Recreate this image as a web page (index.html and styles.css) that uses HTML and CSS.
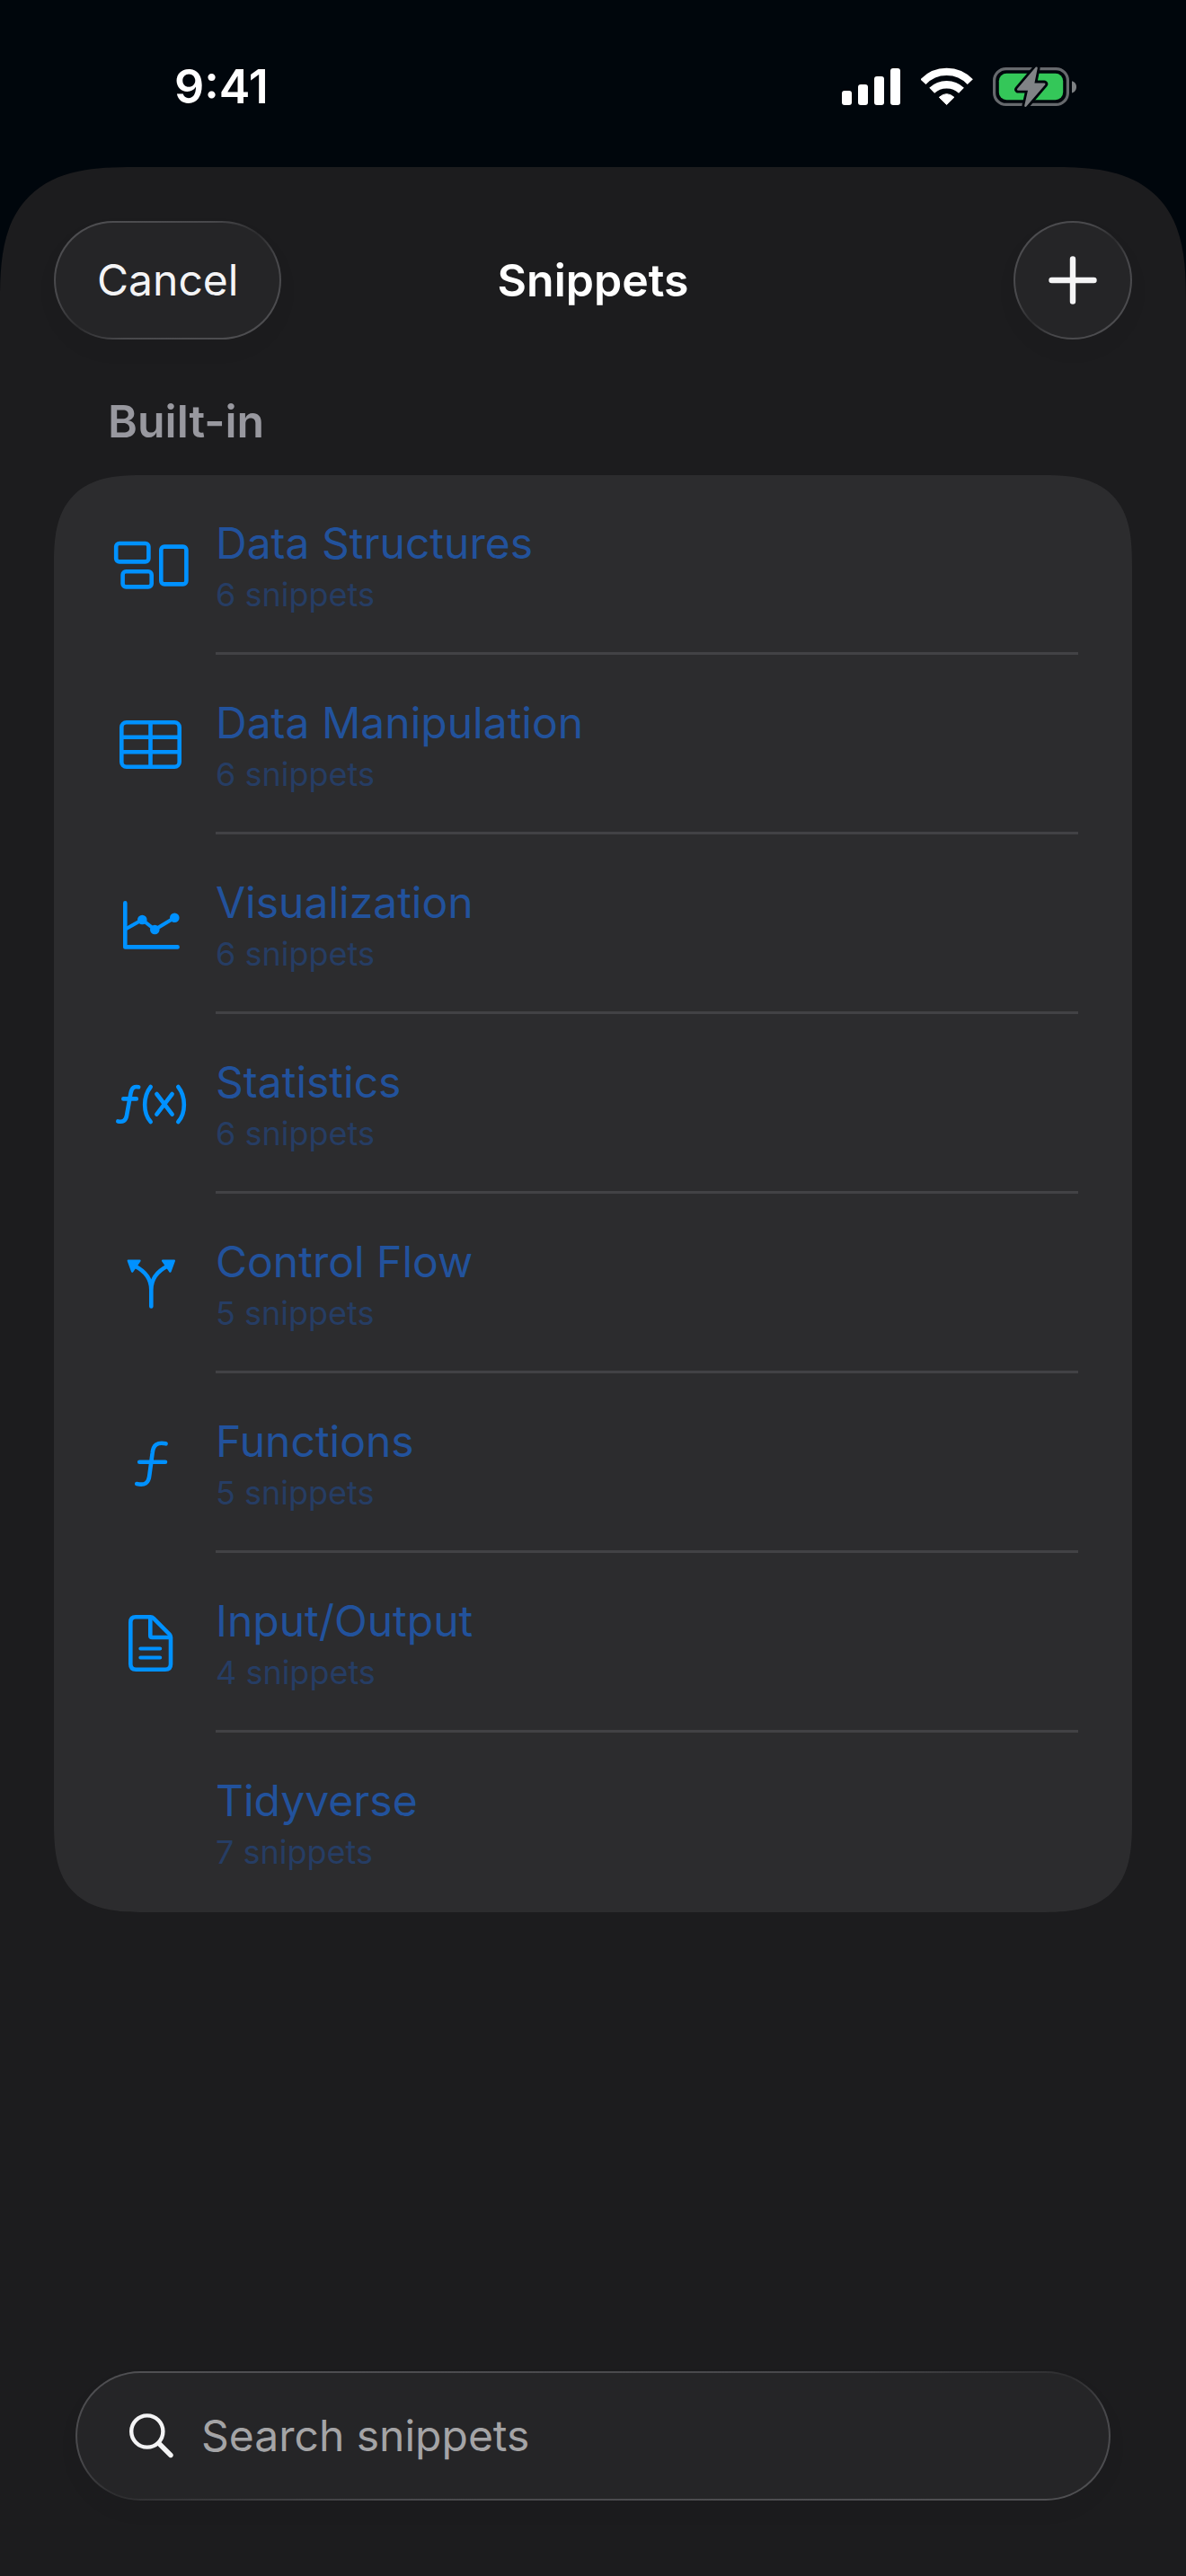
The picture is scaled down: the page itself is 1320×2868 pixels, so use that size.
FILE: index.html
```html
<!DOCTYPE html>
<html lang="en">
<head>
<meta charset="utf-8">
<meta name="viewport" content="width=device-width, initial-scale=1">
<title>Snippets</title>
<link rel="stylesheet" href="styles.css">
</head>
<body>
<div class="status-bar">
  <time class="clock">9:41</time>
  <div class="status-icons">
    <svg width="66" height="44" viewBox="0 0 66 44" fill="#fff" aria-hidden="true">
      <rect x="0" y="26" width="11" height="16" rx="3"/>
      <rect x="18" y="19" width="11" height="23" rx="3"/>
      <rect x="36" y="10" width="11" height="32" rx="3"/>
      <rect x="54" y="1" width="11" height="41" rx="3"/>
    </svg>
    <svg width="58" height="44" viewBox="0 0 58 44" fill="none" stroke="#fff" aria-hidden="true">
      <path d="M2.4 16.2A36 36 0 0 1 54.8 16.2" stroke-width="8.4"/>
      <path d="M12.2 25.8A23.7 23.7 0 0 1 45 25.8" stroke-width="8.4"/>
      <path d="M20.3 33.3Q28.6 26 36.9 33.3L28.6 41.5Z" fill="#fff" stroke-width="1" stroke-linejoin="round"/>
    </svg>
    <svg class="battery" width="94" height="44" viewBox="0 0 94 44" aria-hidden="true">
      <rect x="1.6" y="1.6" width="81.8" height="39.8" rx="13" fill="none" stroke="#66696d" stroke-width="3.2"/>
      <path d="M88 15.2C91.500 16 93 18.800 93 21.700C93 24.600 91.500 27.500 88 28.400Z" fill="#7d8083"/>
      <rect x="6.800" y="6.800" width="71.400" height="29.400" rx="8.500" fill="#34c759"/>
      <path d="M48.600 .6L28.200 24.600H40.500L36.400 42.800L57.200 18.600H45Z" fill="#00060c" stroke="#00060c" stroke-width="8" stroke-linejoin="round"/>
      <path d="M48.600 .6L28.200 24.600H40.500L36.400 42.800L57.200 18.600H45Z" fill="#808386" stroke="#808386" stroke-width="2.400" stroke-linejoin="round"/>
    </svg>
  </div>
</div>

<main class="sheet">
  <header class="nav">
    <button type="button" class="glass cancel">Cancel</button>
    <h1 class="title">Snippets</h1>
    <button type="button" class="glass add" aria-label="Add snippet">
      <svg width="54" height="54" viewBox="0 0 54 54" fill="none" stroke="#f4f4f5" stroke-width="6.400" stroke-linecap="round" aria-hidden="true"><path d="M27 3.500V50.500M3.500 27H50.500"/></svg>
    </button>
  </header>

  <section>
    <h2 class="section-title">Built-in</h2>
    <ul class="list">
      <li><a class="row" href="#data-structures">
        <svg class="icon" viewBox="0 0 96 100" aria-hidden="true"><rect x="9.200" y="26" width="36.200" height="20.400" rx="3.600"/><rect x="16.600" y="57.300" width="32.100" height="17.100" rx="3.600"/><rect x="59.300" y="29.600" width="28.100" height="41.800" rx="3.600"/></svg>
        <span class="label"><span class="name">Data Structures</span><span class="count">6 snippets</span></span></a></li>
      <li><a class="row" href="#data-manipulation">
        <svg class="icon" viewBox="0 0 96 100" aria-hidden="true"><rect x="15.300" y="25.300" width="64.400" height="49.400" rx="5.500"/><path d="M47.500 25.300V74.700M15.300 41.700H79.700M15.300 58.200H79.700"/></svg>
        <span class="label"><span class="name">Data Manipulation</span><span class="count">6 snippets</span></span></a></li>
      <li><a class="row" href="#visualization">
        <svg class="icon" viewBox="0 0 96 100" aria-hidden="true"><path d="M19.300 26.400V75.400H77.600"/><path class="thin" d="M20.500 55L38.300 45L52.300 56L74.300 42.700"/><g class="solid"><circle cx="38.300" cy="45" r="5.300"/><circle cx="52.300" cy="56" r="5.300"/><circle cx="74.300" cy="42.700" r="5.300"/></g></svg>
        <span class="label"><span class="name">Visualization</span><span class="count">6 snippets</span></span></a></li>
      <li><a class="row" href="#statistics">
        <svg class="icon" viewBox="0 0 96 100" aria-hidden="true"><path d="M11.300 69.400C17 70.600 20 68.600 21 63L25.500 38C26.700 31.800 29.500 30.200 34.200 31.200M17.300 44.400H31.800"/><path d="M47.700 31C39 42 39 60 47.700 70M78.300 31C87 42 87 60 78.300 70M54.400 39L71.600 61.600M71.600 39L54.400 61.600"/></svg>
        <span class="label"><span class="name">Statistics</span><span class="count">6 snippets</span></span></a></li>
      <li><a class="row" href="#control-flow">
        <svg class="icon" viewBox="0 0 96 100" aria-hidden="true"><path d="M48.300 75.500V57C48.300 46 42 36.500 30 30.500M48.300 57C48.300 46 54.600 36.500 66.600 30.500"/><g class="solid"><path d="M22.800 24.600H35.500L27.200 36.600ZM73.800 24.600H61.100L69.400 36.600Z" stroke="currentColor" stroke-width="2.400"/></g></svg>
        <span class="label"><span class="name">Control Flow</span><span class="count">5 snippets</span></span></a></li>
      <li><a class="row" href="#functions">
        <svg class="icon" viewBox="0 0 96 100" aria-hidden="true"><path d="M32.200 73C41 75 45.500 72.500 46.400 63L49.600 39C50.500 29.500 55 26.500 64.600 28.300M35.200 48.700H64"/></svg>
        <span class="label"><span class="name">Functions</span><span class="count">5 snippets</span></span></a></li>
      <li><a class="row" href="#input-output">
        <svg class="icon" viewBox="0 0 96 100" aria-hidden="true"><path d="M31 21.300H47.500Q49.500 21.300 51 22.800L68.600 40.500Q70 42 70 44V73.700Q70 79.700 64 79.700H31.300Q25.300 79.700 25.300 73.700V27.300Q25.300 21.300 31 21.300Z"/><path d="M47.300 22V42Q47.300 44 49.300 44H69.500"/><path class="thin" d="M36.300 56.400H58.200M36.300 66.600H58.200"/></svg>
        <span class="label"><span class="name">Input/Output</span><span class="count">4 snippets</span></span></a></li>
      <li><a class="row" href="#tidyverse">
        <span class="icon"></span>
        <span class="label"><span class="name">Tidyverse</span><span class="count">7 snippets</span></span></a></li>
    </ul>
  </section>

  <label class="glass search">
    <svg width="50" height="50" viewBox="0 0 50 50" fill="none" stroke="#f4f4f5" stroke-linecap="round" aria-hidden="true"><circle cx="19.800" cy="20" r="17.600" stroke-width="4.400"/><path d="M33 33.500L46 46.500" stroke-width="5.400"/></svg>
    <input type="search" placeholder="Search snippets" aria-label="Search snippets">
  </label>
</main>
</body>
</html>
```
FILE: styles.css
```css
* {
  box-sizing: border-box;
}

body {
  margin: 0;
  min-height: 100vh;
  display: flex;
  flex-direction: column;
  background: #00060c;
  color: #fff;
  font-family: Inter, "Liberation Sans", sans-serif;
  font-size: 48px;
  line-height: 66px;
}

.status-bar {
  display: flex;
  align-items: center;
  justify-content: space-between;
  height: 186px;
  padding: 8px 121px 0 194px;
}

.clock {
  font-size: 52px;
  font-weight: 600;
}

.status-icons {
  display: flex;
  gap: 22px;
}

.battery {
  overflow: visible;
}

.sheet {
  flex: 1;
  display: flex;
  flex-direction: column;
  padding: 60px 60px 84px;
  border-radius: 114px 114px 0 0;
  background: #1c1c1e;
}

.nav {
  display: grid;
  grid-template-columns: 1fr auto 1fr;
  align-items: center;
}

.glass {
  border: 2px solid transparent;
  border-radius: 72px;
  background:
    linear-gradient(#252527, #252527) padding-box,
    linear-gradient(to bottom right, #505053, #48484b 35%, #2d2d2f 50%, #48484b 65%, #505053) border-box;
  box-shadow: 0 12px 24px rgba(0, 0, 0, 0.04);
  color: #f4f4f5;
  font: inherit;
}

.cancel {
  justify-self: start;
  height: 132px;
  padding: 0 46px;
}

.add {
  justify-self: end;
  display: grid;
  place-items: center;
  width: 132px;
  height: 132px;
  padding: 0;
}

.title {
  margin: 0;
  font-size: 50px;
  font-weight: 600;
}

.section-title {
  margin: 58px 60px 27px;
  color: #98989f;
  font-size: 50px;
  font-weight: 600;
}

.list {
  margin: 0;
  padding: 0;
  list-style: none;
  border-radius: 78px;
  background: #2c2c2e;
}

/* Continuous-curvature corners where the browser can draw them */
@supports (corner-shape: superellipse(1.5)) {
  .sheet {
    border-radius: 150px 150px 0 0;
    corner-shape: superellipse(1.5);
  }

  .list {
    border-radius: 102px;
    corner-shape: superellipse(1.5);
  }
}

.row {
  display: flex;
  gap: 24px;
  align-items: center;
  padding: 0 60px;
  color: #0091ff;
  text-decoration: none;
}

.icon {
  flex: none;
  width: 96px;
  height: 100px;
  fill: none;
  stroke: currentColor;
  stroke-width: 4.6;
  stroke-linecap: round;
  stroke-linejoin: round;
}

.thin {
  stroke-width: 4;
}

.solid {
  fill: currentColor;
  stroke: none;
}

.label {
  flex: 1;
  display: flex;
  flex-direction: column;
  justify-content: center;
  height: 200px;
  box-shadow: inset 0 -3px #424245;
}

li:last-child .label {
  box-shadow: none;
}

.name {
  color: #22529c;
}

.count {
  color: #263d64;
  font-size: 36px;
  line-height: 48px;
}

.search {
  display: flex;
  align-items: center;
  gap: 30px;
  height: 144px;
  margin: auto 24px 0;
  padding: 0 58px;
}

.search input {
  flex: 1;
  min-width: 0;
  padding: 0;
  border: 0;
  outline: 0;
  background: none;
  color: #fff;
  font: inherit;
  appearance: none;
}

.search input::placeholder {
  color: #a4a4a6;
  opacity: 1;
}
```
